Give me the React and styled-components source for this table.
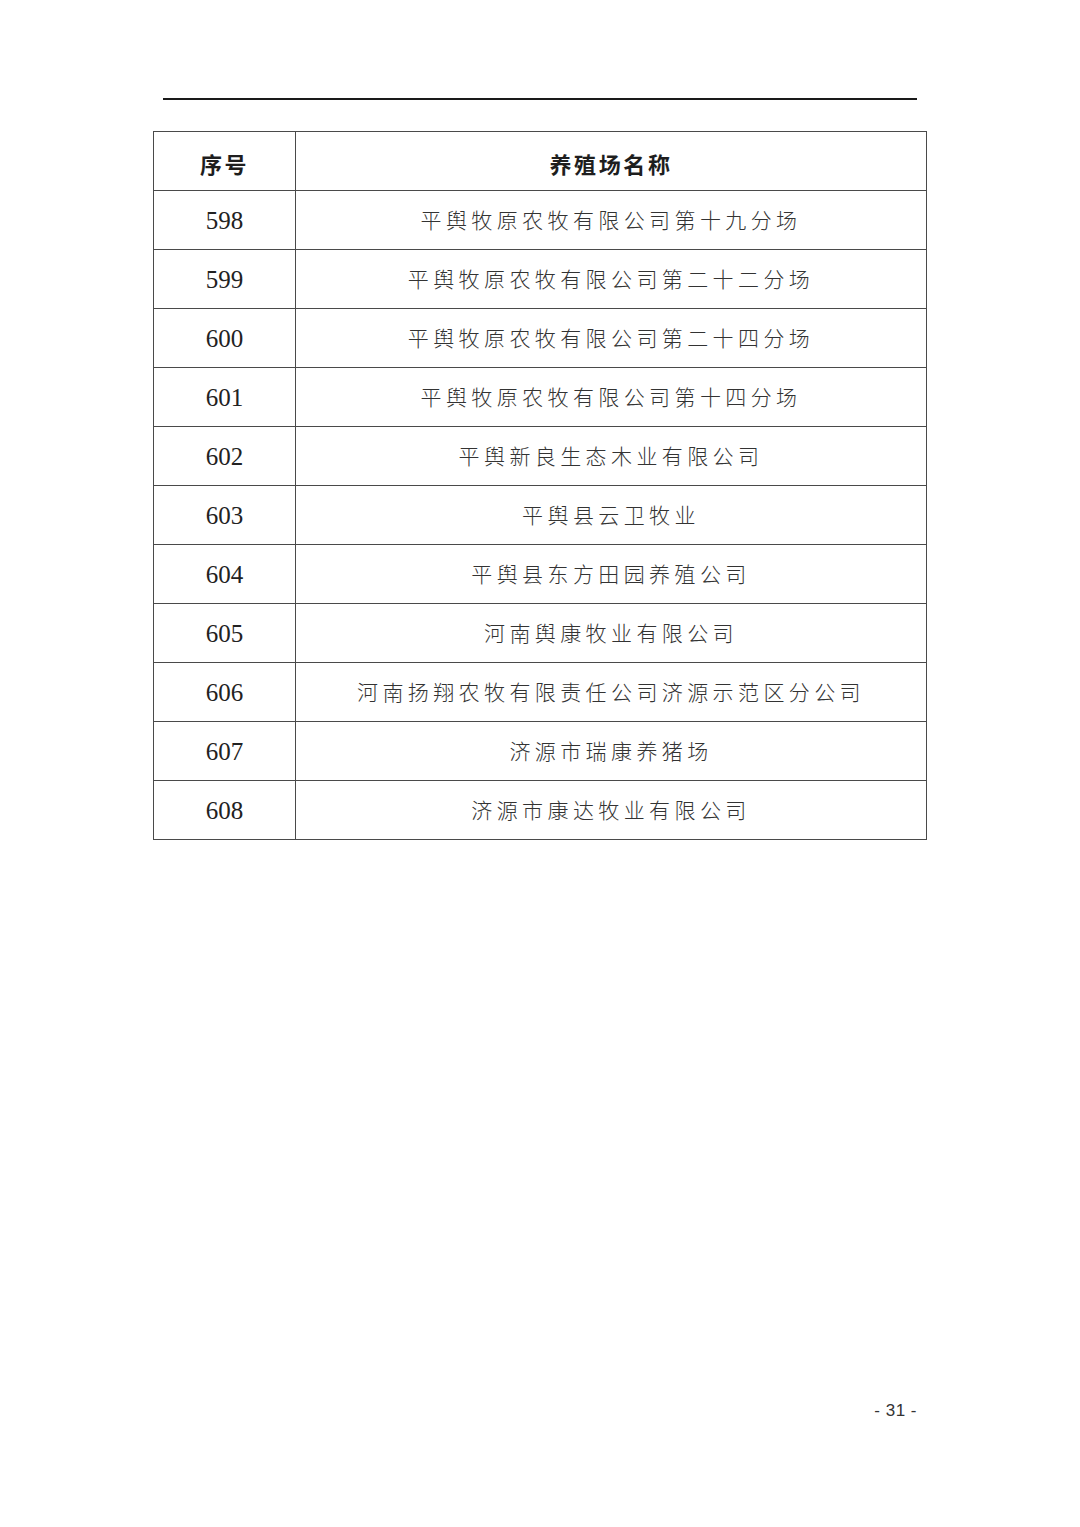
import React from 'react';
import styled, { createGlobalStyle } from 'styled-components';

const GlobalStyle = createGlobalStyle`
  html, body {
    margin: 0;
    padding: 0;
    background: #fff;
  }
  body {
    font-family: "Liberation Serif", "Noto Sans CJK SC", serif;
  }
`;

const Page = styled.div`
  width: 1080px;
  height: 1527px;
  box-sizing: border-box;
  padding-top: 98px;
  display: flex;
  flex-direction: column;
`;

const TopRule = styled.div`
  margin-left: 163px;
  width: 754px;
  height: 2px;
  background: #1a1a1a;
`;

const Table = styled.table`
  margin-top: 31px;
  margin-left: 153px;
  width: 774px;
  border-collapse: collapse;
  table-layout: fixed;
`;

const Cell = styled.td`
  border: 1px solid #4a4a4a;
  height: 59px;
  padding: 0;
  text-align: center;
  vertical-align: middle;
  box-sizing: border-box;
`;

const NumCell = styled(Cell)`
  width: 142px;
  font-family: "Liberation Serif", serif;
  font-size: 25px;
  color: #222;
  padding-top: 1px;
`;

const NameCell = styled(Cell)`
  font-family: "Noto Sans CJK SC", sans-serif;
  font-size: 21px;
  font-weight: 300;
  letter-spacing: 4.4px;
  color: #333;
  padding-bottom: 2px;
`;

const HeadCell = styled(Cell)`
  font-family: "Noto Sans CJK SC", sans-serif;
  font-size: 22px;
  font-weight: 700;
  letter-spacing: 2.6px;
  color: #1e1e1e;
  padding-top: 4px;
  ${({ $narrow }) => $narrow && 'width: 142px;'}
`;

const Footer = styled.div`
  margin-top: auto;
  margin-bottom: 106px;
  width: 917px;
  text-align: right;
  font-family: "Liberation Sans", sans-serif;
  font-size: 17px;
  letter-spacing: 0.5px;
  color: #333;
`;

const rows = [
  ['598', '平舆牧原农牧有限公司第十九分场'],
  ['599', '平舆牧原农牧有限公司第二十二分场'],
  ['600', '平舆牧原农牧有限公司第二十四分场'],
  ['601', '平舆牧原农牧有限公司第十四分场'],
  ['602', '平舆新良生态木业有限公司'],
  ['603', '平舆县云卫牧业'],
  ['604', '平舆县东方田园养殖公司'],
  ['605', '河南舆康牧业有限公司'],
  ['606', '河南扬翔农牧有限责任公司济源示范区分公司'],
  ['607', '济源市瑞康养猪场'],
  ['608', '济源市康达牧业有限公司'],
];

export default function App() {
  return (
    <>
      <GlobalStyle />
      <Page>
        <TopRule />
        <Table>
          <thead>
            <tr>
              <HeadCell as="th" $narrow>序号</HeadCell>
              <HeadCell as="th">养殖场名称</HeadCell>
            </tr>
          </thead>
          <tbody>
            {rows.map(([num, name]) => (
              <tr key={num}>
                <NumCell>{num}</NumCell>
                <NameCell>{name}</NameCell>
              </tr>
            ))}
          </tbody>
        </Table>
        <Footer>- 31 -</Footer>
      </Page>
    </>
  );
}
